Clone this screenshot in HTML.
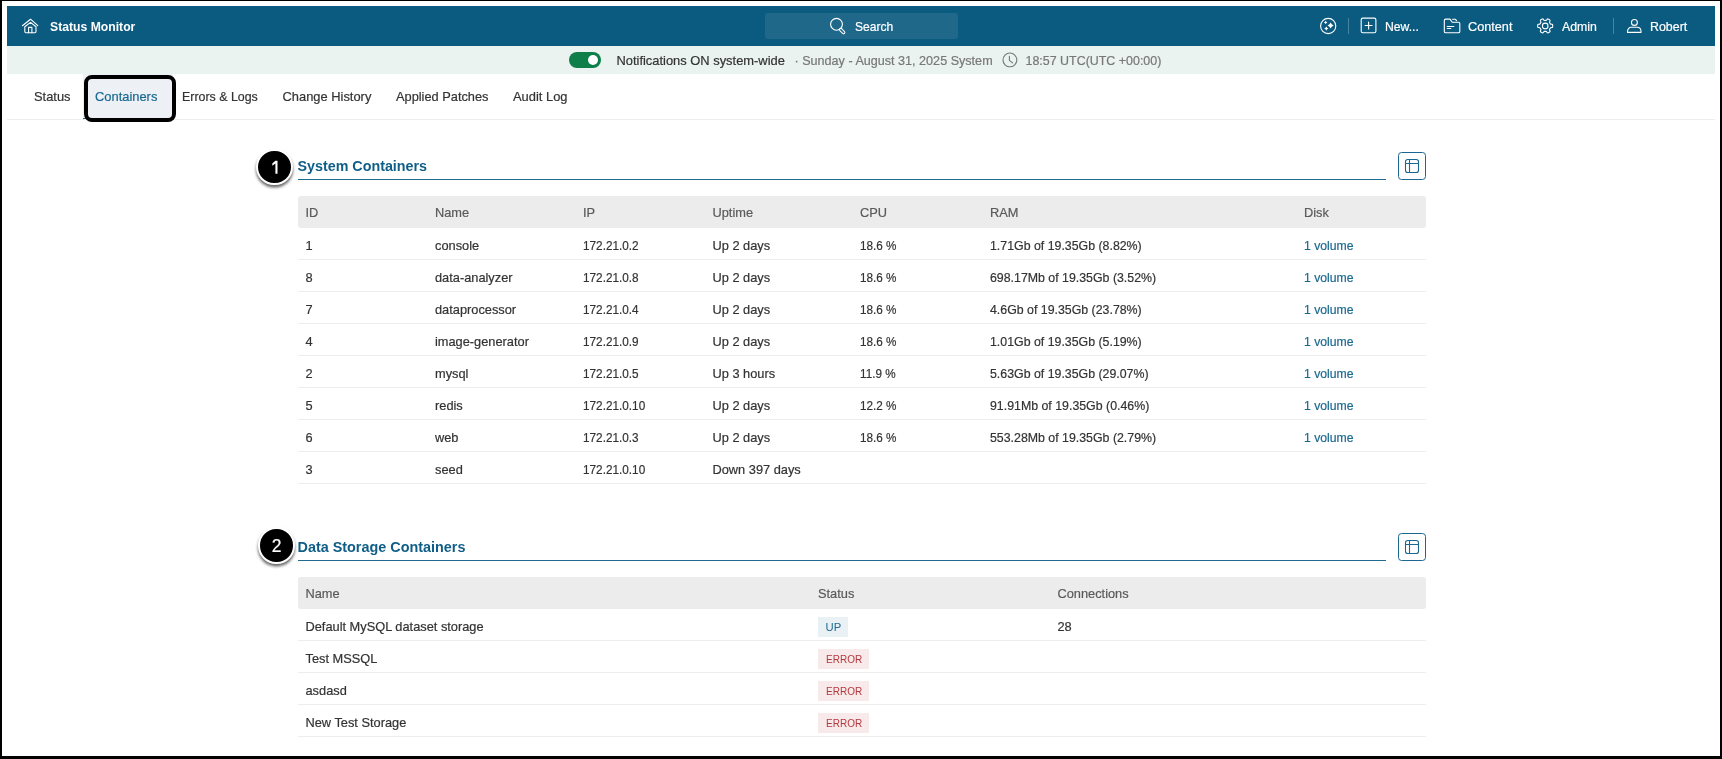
<!DOCTYPE html>
<html><head><meta charset="utf-8"><style>
html,body{margin:0;padding:0}
body{width:1722px;height:759px;background:#000;position:relative;overflow:hidden;font-family:"Liberation Sans",sans-serif}
.t{position:absolute;white-space:nowrap;line-height:20px;height:20px;-webkit-text-stroke:0.2px currentColor}
.r{position:absolute;box-sizing:content-box}
.badge{width:32.5px;height:32.5px;border:2px solid #fff;border-radius:50%;background:#000;box-shadow:0 2.5px 3px rgba(0,0,0,0.6)}
</style></head><body>
<div id="wrap" style="position:absolute;left:0;top:0;width:1722px;height:759px;will-change:transform">
<div class="r" style="left:2px;top:1px;width:1718px;height:755px;background:#fff"></div>
<div class="r" style="left:7px;top:6px;width:1708px;height:40px;background:#0b5a7f"></div>
<svg class="r" style="left:18px;top:14px" width="24" height="24" viewBox="0 0 24 24" fill="none"><path stroke="#fff" stroke-width="1.1" stroke-linecap="round" stroke-linejoin="round" d="M4.4 11.7 L12.5 5.2 L19.8 11.7"/><path stroke="#fff" stroke-width="1.1" stroke-linecap="round" stroke-linejoin="round" d="M6.8 12.7 L12.5 8.4 L18 12.7 V17.5 Q18 18.7 16.8 18.7 H8 Q6.8 18.7 6.8 17.5 Z"/><path stroke="#fff" stroke-width="1.1" stroke-linecap="round" stroke-linejoin="round" d="M10.6 18.7 V13.4 H13.9 V18.7"/></svg>
<div class="t" style="left:50.00px;top:16.76px;font-size:12.8px;color:#fff;font-weight:700;-webkit-text-stroke:0;transform:scaleX(0.953);transform-origin:0 0">Status Monitor</div>
<div class="r" style="left:765px;top:13px;width:193px;height:26px;background:rgba(255,255,255,0.085);border-radius:3px"></div>
<svg class="r" style="left:826px;top:14px" width="24" height="24" viewBox="0 0 24 24" fill="none"><circle stroke="#fff" stroke-width="1.1" stroke-linecap="round" stroke-linejoin="round" cx="10.5" cy="10.3" r="5.9"/><rect stroke="#fff" stroke-width="1" x="14.2" y="13.9" width="6.6" height="2.6" rx="1.3" transform="rotate(45 14.6 14.5)"/></svg>
<div class="t" style="left:855.00px;top:16.76px;font-size:12.8px;color:#fff;font-weight:400;transform:scaleX(0.945);transform-origin:0 0">Search</div>
<svg class="r" style="left:1316px;top:14px" width="24" height="24" viewBox="0 0 24 24" fill="none"><circle stroke="#fff" stroke-width="1.1" stroke-linecap="round" stroke-linejoin="round" cx="12.2" cy="12" r="7.6"/><path fill="#fff" d="M14.6 8.4 Q15.44 10.56 17.6 11.4 Q15.44 12.24 14.6 14.4 Q13.76 12.24 11.6 11.4 Q13.76 10.56 14.6 8.4ZM9.65 6.7 Q10.126000000000001 7.924 11.35 8.4 Q10.126000000000001 8.876000000000001 9.65 10.1 Q9.174 8.876000000000001 7.95 8.4 Q9.174 7.924 9.65 6.7ZM10.3 12.5 Q10.888000000000002 14.012 12.4 14.6 Q10.888000000000002 15.187999999999999 10.3 16.7 Q9.712 15.187999999999999 8.200000000000001 14.6 Q9.712 14.012 10.3 12.5Z"/></svg>
<div class="r" style="left:1348px;top:18px;width:1px;height:16px;background:rgba(255,255,255,0.25)"></div>
<svg class="r" style="left:1356px;top:14px" width="24" height="24" viewBox="0 0 24 24" fill="none"><rect stroke="#fff" stroke-width="1.1" stroke-linecap="round" stroke-linejoin="round" x="5.2" y="4.1" width="14.7" height="14.7" rx="1.6"/><path stroke="#fff" stroke-width="1.1" stroke-linecap="round" stroke-linejoin="round" d="M12.6 8 V15 M9.1 11.5 H16.1"/></svg>
<div class="t" style="left:1385.00px;top:16.76px;font-size:12.8px;color:#fff;font-weight:400;transform:scaleX(0.953);transform-origin:0 0">New...</div>
<svg class="r" style="left:1440px;top:14px" width="24" height="24" viewBox="0 0 24 24" fill="none"><path stroke="#fff" stroke-width="1.1" stroke-linecap="round" stroke-linejoin="round" d="M4.3 6.4 Q4.3 5.1 5.6 5.1 H10 L12.2 8.3 H18.5 Q19.8 8.3 19.8 9.6 V17.5 Q19.8 18.8 18.5 18.8 H5.6 Q4.3 18.8 4.3 17.5 Z"/><path stroke="#fff" stroke-width="1.1" stroke-linecap="round" stroke-linejoin="round" d="M12.5 5.3 H15.4 L16.6 6.6"/><path stroke="#fff" stroke-width="1.1" stroke-linecap="round" stroke-linejoin="round" d="M7.2 12.5 H13.8 M7.2 14.5 H10.8"/></svg>
<div class="t" style="left:1468.00px;top:16.76px;font-size:12.8px;color:#fff;font-weight:400;transform:scaleX(0.992);transform-origin:0 0">Content</div>
<svg class="r" style="left:1533px;top:14px" width="24" height="24" viewBox="0 0 24 24" fill="none"><path stroke="#fff" stroke-width="1.1" stroke-linecap="round" stroke-linejoin="round" d="M19.70 11.90 L19.70 12.10 L19.69 12.29 L19.68 12.49 L19.66 12.68 L19.64 12.88 L19.61 13.07 L19.53 13.26 L19.29 13.41 L18.92 13.51 L18.48 13.58 L18.04 13.63 L17.67 13.68 L17.43 13.75 L17.33 13.87 L17.28 14.00 L17.22 14.14 L17.16 14.27 L17.10 14.40 L17.03 14.52 L16.96 14.65 L16.89 14.77 L16.81 14.90 L16.73 15.02 L16.65 15.13 L16.56 15.25 L16.47 15.36 L16.42 15.50 L16.47 15.75 L16.62 16.09 L16.80 16.50 L16.96 16.91 L17.05 17.29 L17.04 17.57 L16.92 17.73 L16.77 17.85 L16.61 17.97 L16.45 18.08 L16.28 18.19 L16.12 18.29 L15.95 18.40 L15.78 18.49 L15.60 18.58 L15.43 18.67 L15.25 18.75 L15.07 18.83 L14.89 18.90 L14.69 18.93 L14.44 18.79 L14.16 18.53 L13.88 18.18 L13.62 17.82 L13.40 17.53 L13.21 17.35 L13.06 17.33 L12.92 17.35 L12.77 17.37 L12.63 17.38 L12.49 17.39 L12.34 17.40 L12.20 17.40 L12.06 17.40 L11.91 17.39 L11.77 17.38 L11.63 17.37 L11.48 17.35 L11.34 17.33 L11.19 17.35 L11.00 17.53 L10.78 17.82 L10.52 18.18 L10.24 18.53 L9.96 18.79 L9.71 18.93 L9.51 18.90 L9.33 18.83 L9.15 18.75 L8.97 18.67 L8.80 18.58 L8.62 18.49 L8.45 18.40 L8.28 18.29 L8.12 18.19 L7.95 18.08 L7.79 17.97 L7.63 17.85 L7.48 17.73 L7.36 17.57 L7.35 17.29 L7.44 16.91 L7.60 16.50 L7.78 16.09 L7.93 15.75 L7.98 15.50 L7.93 15.36 L7.84 15.25 L7.75 15.13 L7.67 15.02 L7.59 14.90 L7.51 14.77 L7.44 14.65 L7.37 14.52 L7.30 14.40 L7.24 14.27 L7.18 14.14 L7.12 14.00 L7.07 13.87 L6.97 13.75 L6.73 13.68 L6.36 13.63 L5.92 13.58 L5.48 13.51 L5.11 13.41 L4.87 13.26 L4.79 13.07 L4.76 12.88 L4.74 12.68 L4.72 12.49 L4.71 12.29 L4.70 12.10 L4.70 11.90 L4.70 11.70 L4.71 11.51 L4.72 11.31 L4.74 11.12 L4.76 10.92 L4.79 10.73 L4.87 10.54 L5.11 10.39 L5.48 10.29 L5.92 10.22 L6.36 10.17 L6.73 10.12 L6.97 10.05 L7.07 9.93 L7.12 9.80 L7.18 9.66 L7.24 9.53 L7.30 9.40 L7.37 9.28 L7.44 9.15 L7.51 9.03 L7.59 8.90 L7.67 8.78 L7.75 8.67 L7.84 8.55 L7.93 8.44 L7.98 8.30 L7.93 8.05 L7.78 7.71 L7.60 7.30 L7.44 6.89 L7.35 6.51 L7.36 6.23 L7.48 6.07 L7.63 5.95 L7.79 5.83 L7.95 5.72 L8.12 5.61 L8.28 5.51 L8.45 5.40 L8.62 5.31 L8.80 5.22 L8.97 5.13 L9.15 5.05 L9.33 4.97 L9.51 4.90 L9.71 4.87 L9.96 5.01 L10.24 5.27 L10.52 5.62 L10.78 5.98 L11.00 6.27 L11.19 6.45 L11.34 6.47 L11.48 6.45 L11.63 6.43 L11.77 6.42 L11.91 6.41 L12.06 6.40 L12.20 6.40 L12.34 6.40 L12.49 6.41 L12.63 6.42 L12.77 6.43 L12.92 6.45 L13.06 6.47 L13.21 6.45 L13.40 6.27 L13.62 5.98 L13.88 5.62 L14.16 5.27 L14.44 5.01 L14.69 4.87 L14.89 4.90 L15.07 4.97 L15.25 5.05 L15.43 5.13 L15.60 5.22 L15.78 5.31 L15.95 5.40 L16.12 5.51 L16.28 5.61 L16.45 5.72 L16.61 5.83 L16.77 5.95 L16.92 6.07 L17.04 6.23 L17.05 6.51 L16.96 6.89 L16.80 7.30 L16.62 7.71 L16.47 8.05 L16.42 8.30 L16.47 8.44 L16.56 8.55 L16.65 8.67 L16.73 8.78 L16.81 8.90 L16.89 9.03 L16.96 9.15 L17.03 9.28 L17.10 9.40 L17.16 9.53 L17.22 9.66 L17.28 9.80 L17.33 9.93 L17.43 10.05 L17.67 10.12 L18.04 10.17 L18.48 10.22 L18.92 10.29 L19.29 10.39 L19.53 10.54 L19.61 10.73 L19.64 10.92 L19.66 11.12 L19.68 11.31 L19.69 11.51 L19.70 11.70 L19.70 11.90 Z"/><circle stroke="#fff" stroke-width="1.1" stroke-linecap="round" stroke-linejoin="round" cx="12.2" cy="11.9" r="2.8"/></svg>
<div class="t" style="left:1562.00px;top:16.76px;font-size:12.8px;color:#fff;font-weight:400;transform:scaleX(0.961);transform-origin:0 0">Admin</div>
<div class="r" style="left:1613px;top:18px;width:1px;height:16px;background:rgba(255,255,255,0.25)"></div>
<svg class="r" style="left:1622px;top:14px" width="24" height="24" viewBox="0 0 24 24" fill="none"><circle stroke="#fff" stroke-width="1.1" stroke-linecap="round" stroke-linejoin="round" cx="12.4" cy="8.4" r="2.95"/><path stroke="#fff" stroke-width="1.1" stroke-linecap="round" stroke-linejoin="round" d="M5.5 18.4 V17.6 C5.5 15.2 7 13.3 9.3 13.3 H15.2 C17.5 13.3 19 15.2 19 17.6 V18.4 Z"/></svg>
<div class="t" style="left:1650.00px;top:16.76px;font-size:12.8px;color:#fff;font-weight:400;transform:scaleX(0.969);transform-origin:0 0">Robert</div>
<div class="r" style="left:7px;top:46px;width:1708px;height:28px;background:#eaf3f0"></div>
<div class="r" style="left:569px;top:52px;width:32px;height:16px;background:#0f7f4a;border-radius:8px"></div>
<div class="r" style="left:587.6px;top:54.9px;width:10.2px;height:10.2px;background:#fff;border-radius:50%"></div>
<div class="t" style="left:616.50px;top:50.53px;font-size:12.9px;color:#333;font-weight:400;">Notifications ON system-wide</div>
<div class="t" style="left:794.50px;top:50.63px;font-size:12.6px;color:#787878;font-weight:400;">· Sunday - August 31, 2025 System</div>
<svg class="r" style="left:998px;top:48px" width="24" height="24" viewBox="0 0 24 24" fill="none"><circle stroke="#777" stroke-width="1.1" cx="11.9" cy="11.9" r="6.9"/><path stroke="#777" stroke-width="1.1" stroke-linecap="round" stroke-linejoin="round" d="M11.4 8.3 V12.4 L14.6 14.9"/></svg>
<div class="t" style="left:1025.50px;top:50.68px;font-size:12.45px;color:#787878;font-weight:400;">18:57 UTC(UTC +00:00)</div>
<div class="r" style="left:7px;top:119px;width:1708px;height:1px;background:#eeeeee"></div>
<div class="r" style="left:83px;top:74px;width:90px;height:45px;background:#edf1f5"></div>
<div class="r" style="left:83px;top:118px;width:90px;height:1px;background:#1a6891"></div>
<div class="t" style="left:34.00px;top:86.53px;font-size:12.9px;color:#333333;font-weight:400;">Status</div>
<div class="t" style="left:95.00px;top:86.53px;font-size:12.9px;color:#1a6891;font-weight:400;">Containers</div>
<div class="t" style="left:182.00px;top:86.70px;font-size:12.4px;color:#333333;font-weight:400;">Errors &amp; Logs</div>
<div class="t" style="left:282.50px;top:86.53px;font-size:12.9px;color:#333333;font-weight:400;">Change History</div>
<div class="t" style="left:396.00px;top:86.56px;font-size:12.8px;color:#333333;font-weight:400;">Applied Patches</div>
<div class="t" style="left:513.00px;top:86.53px;font-size:12.9px;color:#333333;font-weight:400;">Audit Log</div>
<div class="r" style="left:84px;top:75px;width:84px;height:39px;border:4px solid #000;border-radius:8px"></div>
<div class="r badge" style="left:256.25px;top:148.95px"></div>
<svg class="r" style="left:256.5px;top:149.2px" width="36" height="36" viewBox="0 0 36 36" fill="none"><path fill="#fff" d="M18.4 -6.2 H20.5 V6.8 H18.4 V-3.4 L15.3 -1.2 V-3.5 Z" transform="translate(0 18)"/></svg>
<div class="t" style="left:297.50px;top:156.04px;font-size:14.3px;color:#0f5e87;font-weight:700;-webkit-text-stroke:0;">System Containers</div>
<div class="r" style="left:298px;top:179px;width:1088px;height:1px;background:#1f6b92"></div>
<div class="r" style="left:1398px;top:152px;width:26px;height:26px;border:1px solid #1a6891;border-radius:3.5px"></div>
<svg class="r" style="left:1396px;top:150px" width="32" height="32" viewBox="0 0 32 32" fill="none"><rect x="9.5" y="9.5" width="13" height="13" rx="2.3" stroke="#1a6891" stroke-width="1.1"/><path d="M9.5 13.5 H22.5 M13.5 9.5 V22.5" stroke="#1a6891" stroke-width="1.1"/></svg>
<div class="r" style="left:298px;top:196px;width:1128px;height:32px;background:#ececec;border-radius:3px"></div>
<div class="t" style="left:305.50px;top:202.56px;font-size:12.8px;color:#5a5a5a;font-weight:400;">ID</div>
<div class="t" style="left:435.00px;top:202.56px;font-size:12.8px;color:#5a5a5a;font-weight:400;">Name</div>
<div class="t" style="left:583.00px;top:202.56px;font-size:12.8px;color:#5a5a5a;font-weight:400;">IP</div>
<div class="t" style="left:712.50px;top:202.56px;font-size:12.8px;color:#5a5a5a;font-weight:400;">Uptime</div>
<div class="t" style="left:860.00px;top:202.56px;font-size:12.8px;color:#5a5a5a;font-weight:400;">CPU</div>
<div class="t" style="left:990.00px;top:202.56px;font-size:12.8px;color:#5a5a5a;font-weight:400;">RAM</div>
<div class="t" style="left:1304.00px;top:202.56px;font-size:12.8px;color:#5a5a5a;font-weight:400;">Disk</div>
<div class="r" style="left:298px;top:259px;width:1128px;height:1px;background:#ededed"></div>
<div class="t" style="left:305.50px;top:235.56px;font-size:12.8px;color:#333333;font-weight:400;">1</div>
<div class="t" style="left:435.00px;top:235.56px;font-size:12.8px;color:#333333;font-weight:400;">console</div>
<div class="t" style="left:583.00px;top:235.56px;font-size:12.8px;color:#333333;font-weight:400;transform:scaleX(0.92);transform-origin:0 0">172.21.0.2</div>
<div class="t" style="left:712.50px;top:235.56px;font-size:12.8px;color:#333333;font-weight:400;">Up 2 days</div>
<div class="t" style="left:860.00px;top:235.56px;font-size:12.8px;color:#333333;font-weight:400;transform:scaleX(0.915);transform-origin:0 0">18.6 %</div>
<div class="t" style="left:990.00px;top:235.56px;font-size:12.8px;color:#333333;font-weight:400;transform:scaleX(0.965);transform-origin:0 0">1.71Gb of 19.35Gb (8.82%)</div>
<div class="t" style="left:1304.00px;top:235.56px;font-size:12.8px;color:#1a6891;font-weight:400;transform:scaleX(0.955);transform-origin:0 0">1 volume</div>
<div class="r" style="left:298px;top:291px;width:1128px;height:1px;background:#ededed"></div>
<div class="t" style="left:305.50px;top:267.56px;font-size:12.8px;color:#333333;font-weight:400;">8</div>
<div class="t" style="left:435.00px;top:267.56px;font-size:12.8px;color:#333333;font-weight:400;">data-analyzer</div>
<div class="t" style="left:583.00px;top:267.56px;font-size:12.8px;color:#333333;font-weight:400;transform:scaleX(0.92);transform-origin:0 0">172.21.0.8</div>
<div class="t" style="left:712.50px;top:267.56px;font-size:12.8px;color:#333333;font-weight:400;">Up 2 days</div>
<div class="t" style="left:860.00px;top:267.56px;font-size:12.8px;color:#333333;font-weight:400;transform:scaleX(0.915);transform-origin:0 0">18.6 %</div>
<div class="t" style="left:990.00px;top:267.56px;font-size:12.8px;color:#333333;font-weight:400;transform:scaleX(0.965);transform-origin:0 0">698.17Mb of 19.35Gb (3.52%)</div>
<div class="t" style="left:1304.00px;top:267.56px;font-size:12.8px;color:#1a6891;font-weight:400;transform:scaleX(0.955);transform-origin:0 0">1 volume</div>
<div class="r" style="left:298px;top:323px;width:1128px;height:1px;background:#ededed"></div>
<div class="t" style="left:305.50px;top:299.56px;font-size:12.8px;color:#333333;font-weight:400;">7</div>
<div class="t" style="left:435.00px;top:299.56px;font-size:12.8px;color:#333333;font-weight:400;">dataprocessor</div>
<div class="t" style="left:583.00px;top:299.56px;font-size:12.8px;color:#333333;font-weight:400;transform:scaleX(0.92);transform-origin:0 0">172.21.0.4</div>
<div class="t" style="left:712.50px;top:299.56px;font-size:12.8px;color:#333333;font-weight:400;">Up 2 days</div>
<div class="t" style="left:860.00px;top:299.56px;font-size:12.8px;color:#333333;font-weight:400;transform:scaleX(0.915);transform-origin:0 0">18.6 %</div>
<div class="t" style="left:990.00px;top:299.56px;font-size:12.8px;color:#333333;font-weight:400;transform:scaleX(0.965);transform-origin:0 0">4.6Gb of 19.35Gb (23.78%)</div>
<div class="t" style="left:1304.00px;top:299.56px;font-size:12.8px;color:#1a6891;font-weight:400;transform:scaleX(0.955);transform-origin:0 0">1 volume</div>
<div class="r" style="left:298px;top:355px;width:1128px;height:1px;background:#ededed"></div>
<div class="t" style="left:305.50px;top:331.56px;font-size:12.8px;color:#333333;font-weight:400;">4</div>
<div class="t" style="left:435.00px;top:331.56px;font-size:12.8px;color:#333333;font-weight:400;">image-generator</div>
<div class="t" style="left:583.00px;top:331.56px;font-size:12.8px;color:#333333;font-weight:400;transform:scaleX(0.92);transform-origin:0 0">172.21.0.9</div>
<div class="t" style="left:712.50px;top:331.56px;font-size:12.8px;color:#333333;font-weight:400;">Up 2 days</div>
<div class="t" style="left:860.00px;top:331.56px;font-size:12.8px;color:#333333;font-weight:400;transform:scaleX(0.915);transform-origin:0 0">18.6 %</div>
<div class="t" style="left:990.00px;top:331.56px;font-size:12.8px;color:#333333;font-weight:400;transform:scaleX(0.965);transform-origin:0 0">1.01Gb of 19.35Gb (5.19%)</div>
<div class="t" style="left:1304.00px;top:331.56px;font-size:12.8px;color:#1a6891;font-weight:400;transform:scaleX(0.955);transform-origin:0 0">1 volume</div>
<div class="r" style="left:298px;top:387px;width:1128px;height:1px;background:#ededed"></div>
<div class="t" style="left:305.50px;top:363.56px;font-size:12.8px;color:#333333;font-weight:400;">2</div>
<div class="t" style="left:435.00px;top:363.56px;font-size:12.8px;color:#333333;font-weight:400;">mysql</div>
<div class="t" style="left:583.00px;top:363.56px;font-size:12.8px;color:#333333;font-weight:400;transform:scaleX(0.92);transform-origin:0 0">172.21.0.5</div>
<div class="t" style="left:712.50px;top:363.56px;font-size:12.8px;color:#333333;font-weight:400;">Up 3 hours</div>
<div class="t" style="left:860.00px;top:363.56px;font-size:12.8px;color:#333333;font-weight:400;transform:scaleX(0.915);transform-origin:0 0">11.9 %</div>
<div class="t" style="left:990.00px;top:363.56px;font-size:12.8px;color:#333333;font-weight:400;transform:scaleX(0.965);transform-origin:0 0">5.63Gb of 19.35Gb (29.07%)</div>
<div class="t" style="left:1304.00px;top:363.56px;font-size:12.8px;color:#1a6891;font-weight:400;transform:scaleX(0.955);transform-origin:0 0">1 volume</div>
<div class="r" style="left:298px;top:419px;width:1128px;height:1px;background:#ededed"></div>
<div class="t" style="left:305.50px;top:395.56px;font-size:12.8px;color:#333333;font-weight:400;">5</div>
<div class="t" style="left:435.00px;top:395.56px;font-size:12.8px;color:#333333;font-weight:400;">redis</div>
<div class="t" style="left:583.00px;top:395.56px;font-size:12.8px;color:#333333;font-weight:400;transform:scaleX(0.92);transform-origin:0 0">172.21.0.10</div>
<div class="t" style="left:712.50px;top:395.56px;font-size:12.8px;color:#333333;font-weight:400;">Up 2 days</div>
<div class="t" style="left:860.00px;top:395.56px;font-size:12.8px;color:#333333;font-weight:400;transform:scaleX(0.915);transform-origin:0 0">12.2 %</div>
<div class="t" style="left:990.00px;top:395.56px;font-size:12.8px;color:#333333;font-weight:400;transform:scaleX(0.965);transform-origin:0 0">91.91Mb of 19.35Gb (0.46%)</div>
<div class="t" style="left:1304.00px;top:395.56px;font-size:12.8px;color:#1a6891;font-weight:400;transform:scaleX(0.955);transform-origin:0 0">1 volume</div>
<div class="r" style="left:298px;top:451px;width:1128px;height:1px;background:#ededed"></div>
<div class="t" style="left:305.50px;top:427.56px;font-size:12.8px;color:#333333;font-weight:400;">6</div>
<div class="t" style="left:435.00px;top:427.56px;font-size:12.8px;color:#333333;font-weight:400;">web</div>
<div class="t" style="left:583.00px;top:427.56px;font-size:12.8px;color:#333333;font-weight:400;transform:scaleX(0.92);transform-origin:0 0">172.21.0.3</div>
<div class="t" style="left:712.50px;top:427.56px;font-size:12.8px;color:#333333;font-weight:400;">Up 2 days</div>
<div class="t" style="left:860.00px;top:427.56px;font-size:12.8px;color:#333333;font-weight:400;transform:scaleX(0.915);transform-origin:0 0">18.6 %</div>
<div class="t" style="left:990.00px;top:427.56px;font-size:12.8px;color:#333333;font-weight:400;transform:scaleX(0.965);transform-origin:0 0">553.28Mb of 19.35Gb (2.79%)</div>
<div class="t" style="left:1304.00px;top:427.56px;font-size:12.8px;color:#1a6891;font-weight:400;transform:scaleX(0.955);transform-origin:0 0">1 volume</div>
<div class="r" style="left:298px;top:483px;width:1128px;height:1px;background:#ededed"></div>
<div class="t" style="left:305.50px;top:459.56px;font-size:12.8px;color:#333333;font-weight:400;">3</div>
<div class="t" style="left:435.00px;top:459.56px;font-size:12.8px;color:#333333;font-weight:400;">seed</div>
<div class="t" style="left:583.00px;top:459.56px;font-size:12.8px;color:#333333;font-weight:400;transform:scaleX(0.92);transform-origin:0 0">172.21.0.10</div>
<div class="t" style="left:712.50px;top:459.56px;font-size:12.8px;color:#333333;font-weight:400;">Down 397 days</div>
<div class="r badge" style="left:258.25px;top:527.15px"></div>
<div class="t" style="left:270.50px;top:536.10px;width:12px;text-align:center;font-size:17.5px;color:#fff;line-height:20px">2</div>
<div class="t" style="left:297.50px;top:537.01px;font-size:14.4px;color:#0f5e87;font-weight:700;-webkit-text-stroke:0;">Data Storage Containers</div>
<div class="r" style="left:298px;top:560px;width:1088px;height:1px;background:#1f6b92"></div>
<div class="r" style="left:1398px;top:533px;width:26px;height:26px;border:1px solid #1a6891;border-radius:3.5px"></div>
<svg class="r" style="left:1396px;top:531px" width="32" height="32" viewBox="0 0 32 32" fill="none"><rect x="9.5" y="9.5" width="13" height="13" rx="2.3" stroke="#1a6891" stroke-width="1.1"/><path d="M9.5 13.5 H22.5 M13.5 9.5 V22.5" stroke="#1a6891" stroke-width="1.1"/></svg>
<div class="r" style="left:298px;top:577px;width:1128px;height:32px;background:#ececec;border-radius:3px"></div>
<div class="t" style="left:305.50px;top:583.56px;font-size:12.8px;color:#5a5a5a;font-weight:400;">Name</div>
<div class="t" style="left:818.00px;top:583.56px;font-size:12.8px;color:#5a5a5a;font-weight:400;">Status</div>
<div class="t" style="left:1057.50px;top:583.56px;font-size:12.8px;color:#5a5a5a;font-weight:400;">Connections</div>
<div class="r" style="left:298px;top:640px;width:1128px;height:1px;background:#ededed"></div>
<div class="t" style="left:305.50px;top:616.56px;font-size:12.8px;color:#333333;font-weight:400;">Default MySQL dataset storage</div>
<div class="r" style="left:818px;top:617px;width:30px;height:20px;background:#e9f1f5"></div>
<div class="t" style="left:825.50px;top:617.38px;font-size:11.3px;color:#1d6a93;font-weight:400;-webkit-text-stroke:0">UP</div>
<div class="t" style="left:1057.50px;top:616.56px;font-size:12.8px;color:#333333;font-weight:400;">28</div>
<div class="r" style="left:298px;top:672px;width:1128px;height:1px;background:#ededed"></div>
<div class="t" style="left:305.50px;top:648.56px;font-size:12.8px;color:#333333;font-weight:400;">Test MSSQL</div>
<div class="r" style="left:818px;top:649px;width:51px;height:20px;background:#f8eaea"></div>
<div class="t" style="left:825.50px;top:649.42px;font-size:11.2px;color:#b3383d;font-weight:400;-webkit-text-stroke:0;transform:scaleX(0.895);transform-origin:0 0">ERROR</div>
<div class="r" style="left:298px;top:704px;width:1128px;height:1px;background:#ededed"></div>
<div class="t" style="left:305.50px;top:680.56px;font-size:12.8px;color:#333333;font-weight:400;">asdasd</div>
<div class="r" style="left:818px;top:681px;width:51px;height:20px;background:#f8eaea"></div>
<div class="t" style="left:825.50px;top:681.42px;font-size:11.2px;color:#b3383d;font-weight:400;-webkit-text-stroke:0;transform:scaleX(0.895);transform-origin:0 0">ERROR</div>
<div class="r" style="left:298px;top:736px;width:1128px;height:1px;background:#ededed"></div>
<div class="t" style="left:305.50px;top:712.56px;font-size:12.8px;color:#333333;font-weight:400;">New Test Storage</div>
<div class="r" style="left:818px;top:713px;width:51px;height:20px;background:#f8eaea"></div>
<div class="t" style="left:825.50px;top:713.42px;font-size:11.2px;color:#b3383d;font-weight:400;-webkit-text-stroke:0;transform:scaleX(0.895);transform-origin:0 0">ERROR</div>
</div>
</body></html>
